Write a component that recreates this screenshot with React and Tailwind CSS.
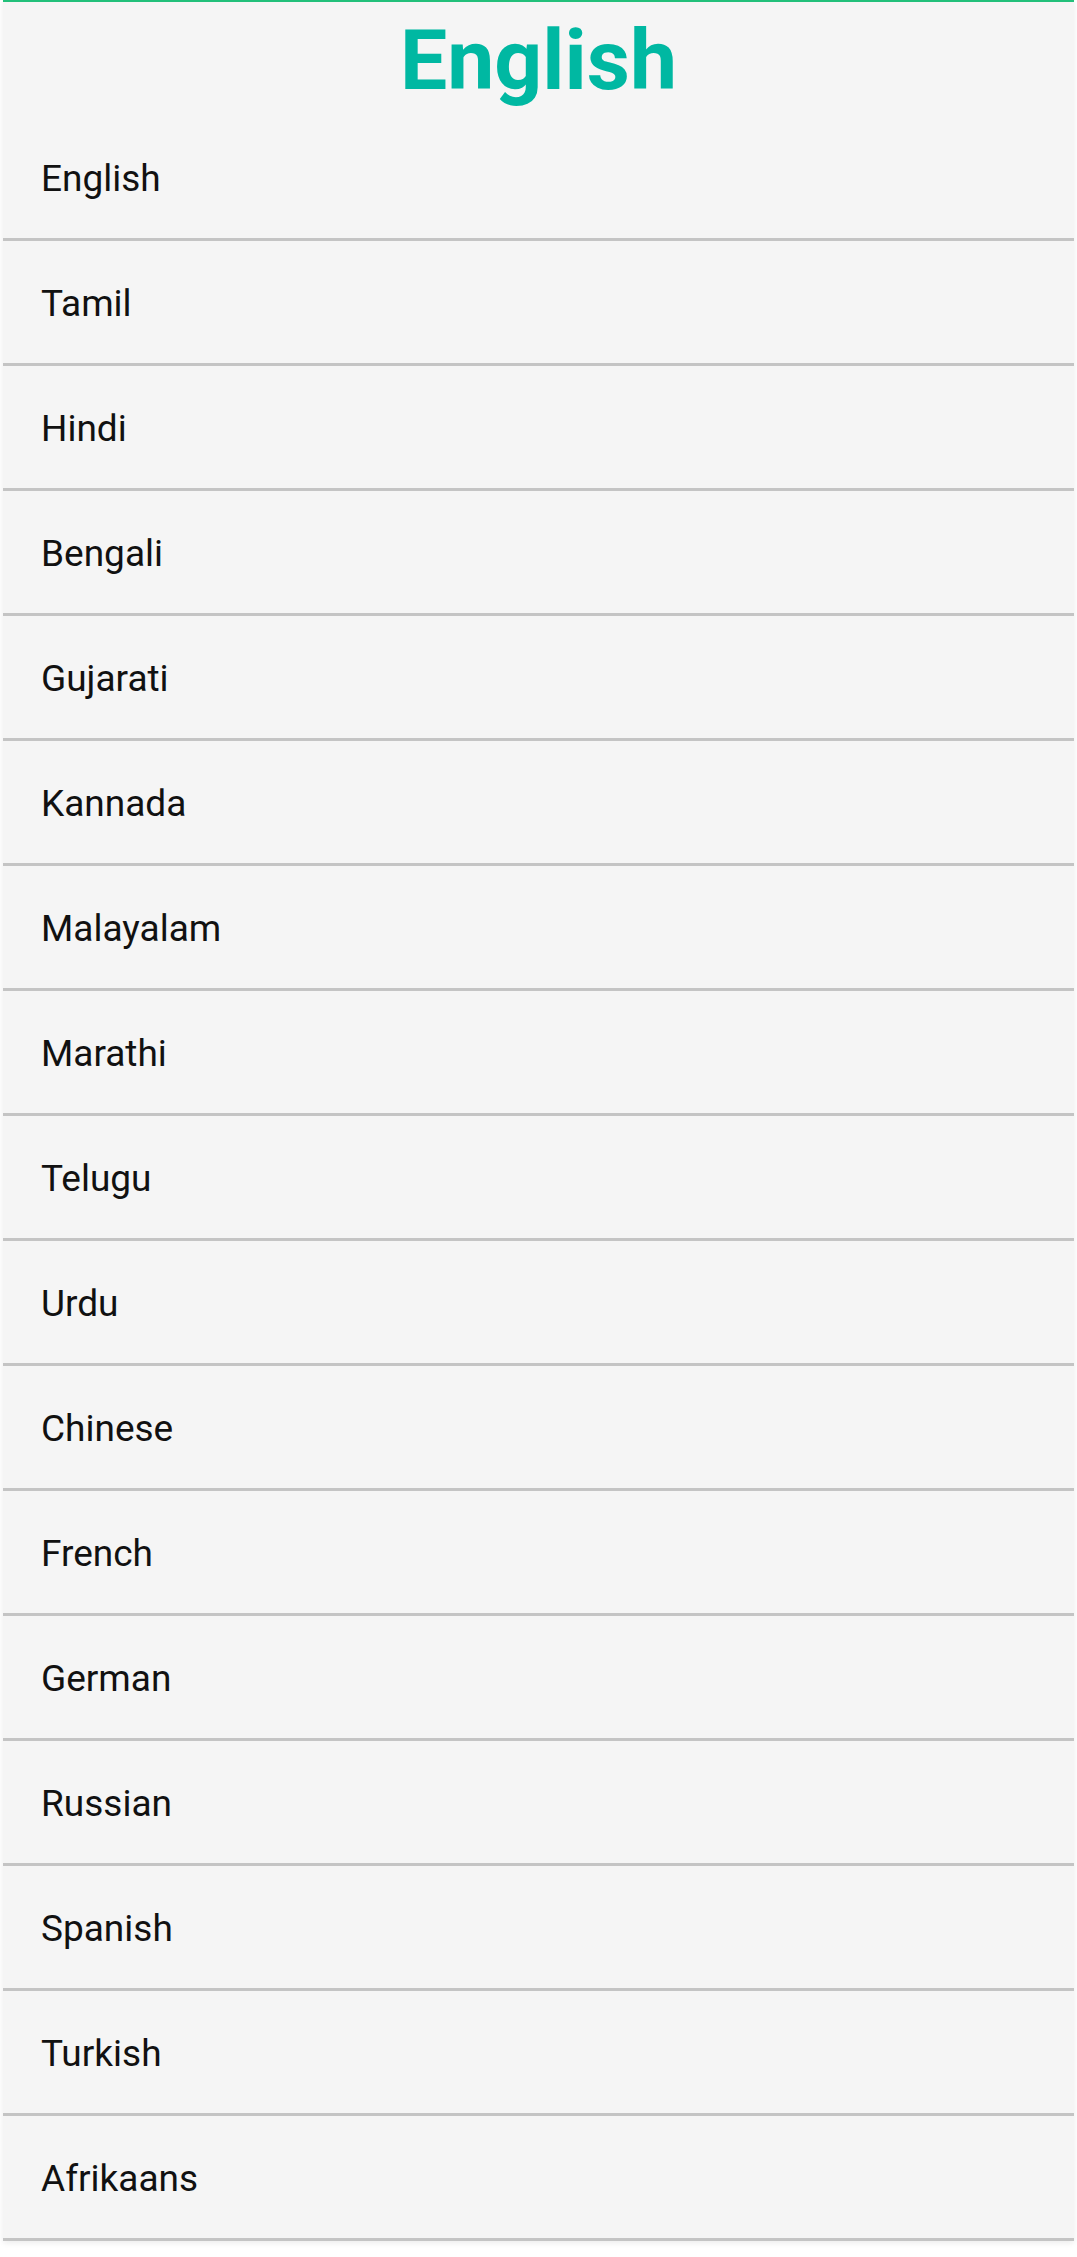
const LANGS = [
  'English', 'Tamil', 'Hindi', 'Bengali', 'Gujarati', 'Kannada', 'Malayalam',
  'Marathi', 'Telugu', 'Urdu', 'Chinese', 'French', 'German', 'Russian',
  'Spanish', 'Turkish', 'Afrikaans',
]

export default function App() {
  return (
    <div className="min-h-[2257px] w-full bg-white font-['Roboto',sans-serif]">
      <div className="mx-[3px] bg-[#f5f5f5] shadow-[0_2px_6px_rgba(0,0,0,0.08)]">
        {/* Titre */}
        <div className="h-[116px] border-t-2 border-[#22c07a] pt-[17px] text-center">
          <h1 className="text-[84px] leading-none font-bold text-[#00b8a2]">English</h1>
        </div>

        {/* Liste */}
        <ul>
          {LANGS.map((l) => (
            <li
              key={l}
              className="flex h-[125px] items-center border-b-[3px] border-[#c4c4c4] pl-[38px] pt-[3px] text-[37px] text-[#111111]"
            >
              {l}
            </li>
          ))}
        </ul>
      </div>
    </div>
  )
}
